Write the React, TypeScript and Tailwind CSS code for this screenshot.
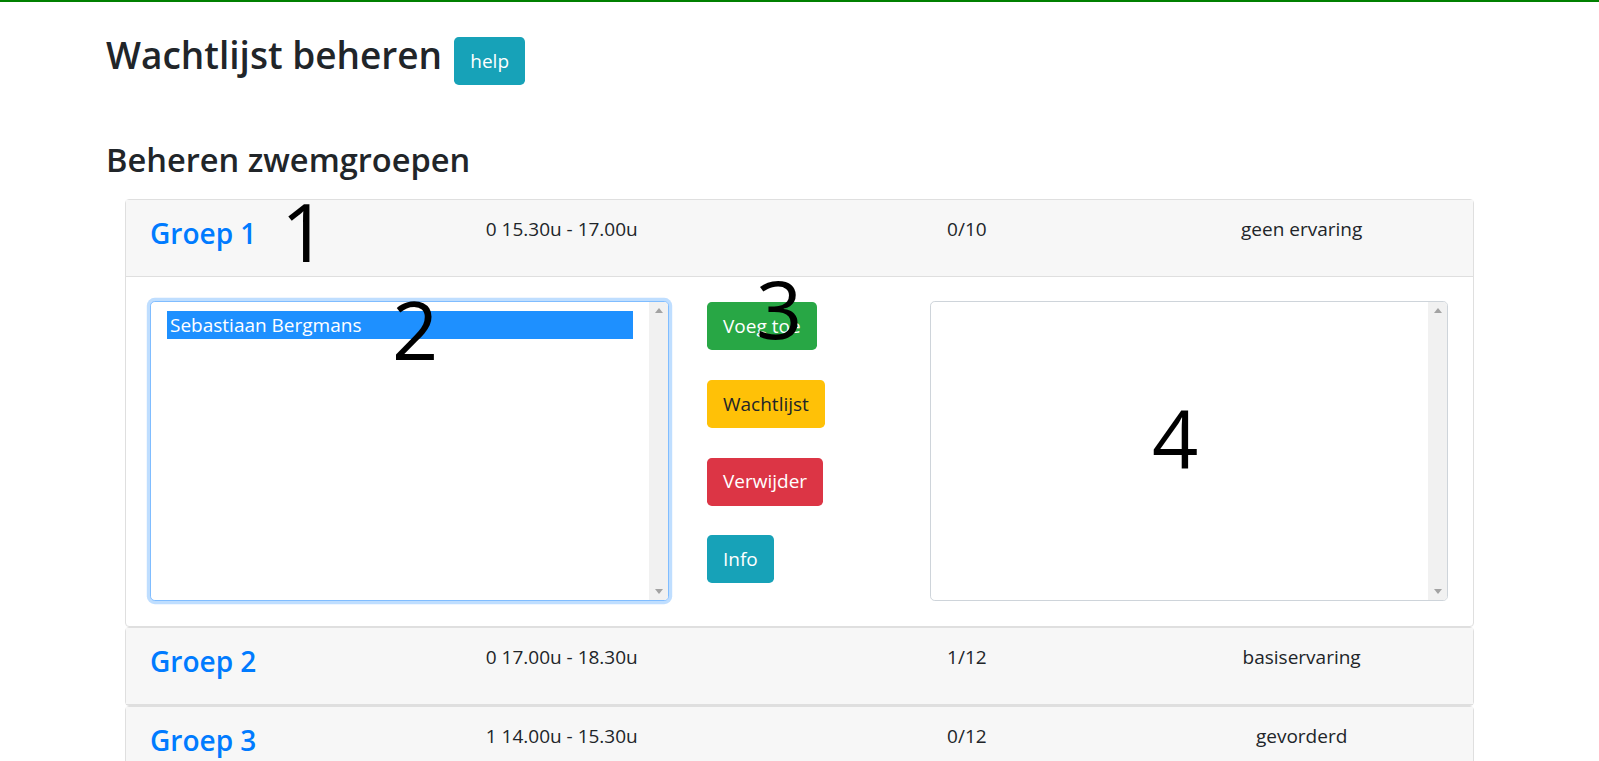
import React from "react";

type Groep = {
    name: string;
    time: string;
    count: string;
    level: string;
    open?: boolean;
};

const groepen: Groep[] = [
    { name: "Groep 1", time: "0 15.30u - 17.00u", count: "0/10", level: "geen ervaring", open: true },
    { name: "Groep 2", time: "0 17.00u - 18.30u", count: "1/12", level: "basiservaring" },
    { name: "Groep 3", time: "1 14.00u - 15.30u", count: "0/12", level: "gevorderd" },
];

const ScrollTrack = () => (
    <div className="flex w-[19px] flex-col justify-between bg-[#f1f1f1]">
        <div className="flex h-[17px] items-center justify-center">
            <svg width="8" height="5" viewBox="0 0 8 5">
                <path d="M0 5 L4 0 L8 5 Z" fill="#a3a3a3" />
            </svg>
        </div>
        <div className="flex h-[17px] items-center justify-center">
            <svg width="8" height="5" viewBox="0 0 8 5">
                <path d="M0 0 L4 5 L8 0 Z" fill="#a3a3a3" />
            </svg>
        </div>
    </div>
);

const Listbox = ({ items, focused }: { items: string[]; focused?: boolean }) => (
    <div
        className={`flex h-[300px] overflow-hidden rounded-[4.8px] border bg-white ${
            focused ? "border-[#80bdff] shadow-[0_0_0_3.2px_rgba(0,123,255,0.25)]" : "border-[#ced4da]"
        }`}
    >
        <div className="flex-1 px-[16px] pt-[9px]">
            {items.map((item) => (
                <div key={item} className="h-[28px] bg-[#1e90ff] pl-[3px] text-[19px] leading-[28px] text-white">
                    {item}
                </div>
            ))}
        </div>
        <ScrollTrack />
    </div>
);

const GroepCard = ({ groep }: { groep: Groep }) => (
    <div className="rounded-[4px] border border-[#dfdfdf] bg-white">
        <div className="grid h-[77px] grid-cols-4 border-b border-[#dfdfdf] bg-[#f7f7f7] px-[4px]">
            <div className="pl-[20px] pt-[17px] text-[28px] font-semibold leading-[1.2] text-[#007bff]">{groep.name}</div>
            <div className="pl-[21px] pt-[15px] text-[19px] leading-[1.5]">{groep.time}</div>
            <div className="pt-[15px] text-center text-[19px] leading-[1.5]">{groep.count}</div>
            <div className="pt-[15px] text-center text-[19px] leading-[1.5]">{groep.level}</div>
        </div>
        {groep.open && (
            <div className="flex h-[349px] pl-[24px] pt-[24px]">
                <div className="w-[519px]">
                    <Listbox items={["Sebastiaan Bergmans"]} focused />
                </div>
                <div className="ml-[38px] flex w-[223px] flex-col items-start gap-[29.7px] pt-[1px]">
                    <button className="h-[48px] rounded-[4.8px] bg-[#28a745] px-[16px] text-[19px] text-white">Voeg toe</button>
                    <button className="h-[48px] rounded-[4.8px] bg-[#ffc107] px-[16px] text-[19px] text-[#212529]">Wachtlijst</button>
                    <button className="h-[48px] rounded-[4.8px] bg-[#dc3545] px-[16px] text-[19px] text-white">Verwijder</button>
                    <button className="h-[48px] rounded-[4.8px] bg-[#17a2b8] px-[16px] text-[19px] text-white">Info</button>
                </div>
                <div className="w-[518px]">
                    <Listbox items={[]} />
                </div>
            </div>
        )}
    </div>
);

export default function App() {
    return (
        <div className="relative h-screen overflow-hidden border-t-2 border-[#008000] bg-white font-['Open_Sans',sans-serif] text-[#212529]">
            <div className="pl-[106px]">
                <h1 className="mt-[34px] flex items-baseline">
                    <span className="text-[37px] font-semibold leading-none">Wachtlijst beheren</span>
                    <button className="relative -top-[1px] ml-[12px] h-[48px] w-[71px] rounded-[4.8px] bg-[#17a2b8] text-[19px] text-white">
                        help
                    </button>
                </h1>
                <h2 className="mt-[54px] text-[32.6px] font-semibold leading-[1.2]">Beheren zwemgroepen</h2>
            </div>
            <div className="mx-[125px] mt-[20px] flex flex-col">
                {groepen.map((g) => (
                    <GroepCard key={g.name} groep={g} />
                ))}
            </div>

            {/* annotation numbers over the screenshot */}
            <div className="absolute left-[281px] top-[188px] text-[81px] leading-none text-black">1</div>
            <div className="absolute left-[392px] top-[286px] text-[81px] leading-none text-black">2</div>
            <div className="absolute left-[756px] top-[265px] text-[81px] leading-none text-black">3</div>
            <div className="absolute left-[1152px] top-[394px] text-[81px] leading-none text-black">4</div>
        </div>
    );
}
